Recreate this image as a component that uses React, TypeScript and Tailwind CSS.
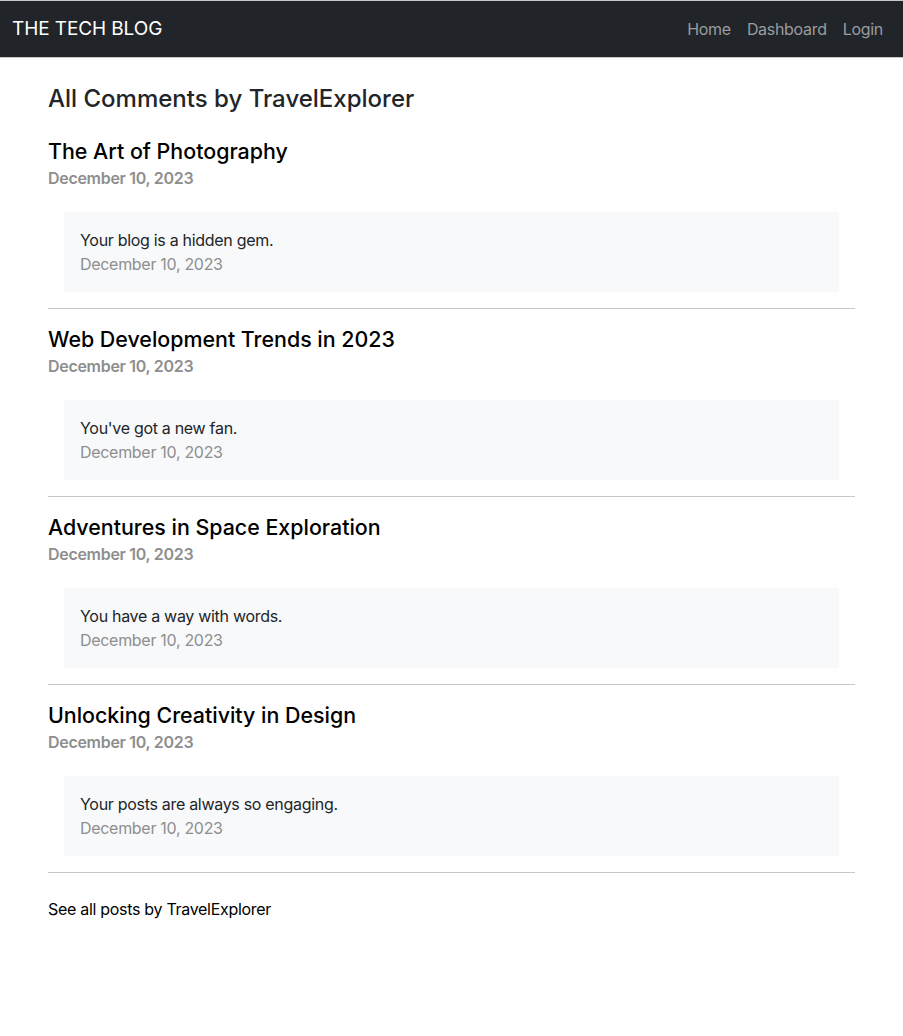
import React from "react";

const posts = [
  { title: "The Art of Photography", comment: "Your blog is a hidden gem." },
  { title: "Web Development Trends in 2023", comment: "You've got a new fan." },
  { title: "Adventures in Space Exploration", comment: "You have a way with words." },
  { title: "Unlocking Creativity in Design", comment: "Your posts are always so engaging." },
];

export default function App() {
  return (
    <div className="min-h-[1036px] bg-white font-['Inter',sans-serif] text-[#212529]">
      <nav className="flex h-[58px] items-center justify-between border-y border-[#c8c8c8] bg-[#212529] pl-3 pr-5">
        <span className="text-[19px] tracking-[-0.1px] text-white">THE TECH BLOG</span>
        <div className="flex gap-4 text-[16px] tracking-[-0.3px] text-[#9a9c9e]">
          <span>Home</span>
          <span>Dashboard</span>
          <span>Login</span>
        </div>
      </nav>
      <main className="px-12 pt-[26px]">
        <h2 className="text-[24px] leading-[29px] font-medium">All Comments by TravelExplorer</h2>
        <div className="mt-6">
          {posts.map((p) => (
            <div key={p.title}>
              <h3 className="text-[21.4px] leading-[29px] font-medium text-black">{p.title}</h3>
              <div className="text-[16px] leading-6 font-semibold tracking-[-0.3px] text-[#8e8e8e]">December 10, 2023</div>
              <div className="mx-4 mt-[22px] bg-[#f8f9fa] p-4 text-[16px] leading-6 tracking-[-0.3px]">
                <p>{p.comment}</p>
                <p className="text-[#8e8e8e]">December 10, 2023</p>
              </div>
              <hr className="my-4 border-t border-[#c8c8c8]" />
            </div>
          ))}
        </div>
        <p className="mt-6 text-[16px] leading-6 tracking-[-0.3px] text-black">See all posts by TravelExplorer</p>
      </main>
    </div>
  );
}
